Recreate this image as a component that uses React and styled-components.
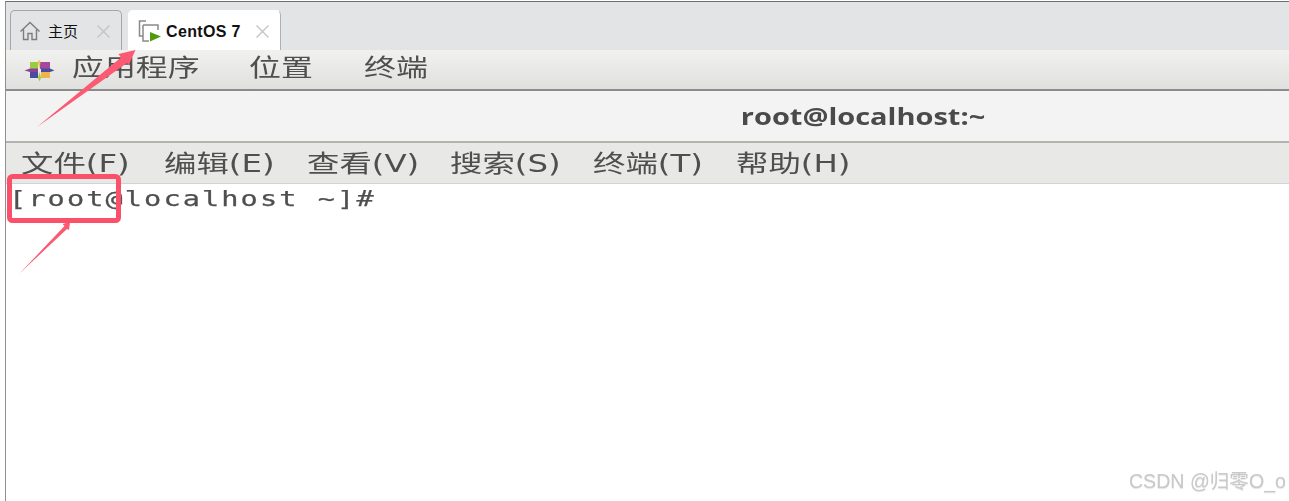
import React from "react";
import styled, { createGlobalStyle } from "styled-components";

const Global = createGlobalStyle`
  html, body { margin: 0; padding: 0; background: #fff; }
  #root { width: 1289px; height: 501px; overflow: hidden; }
`;
const CJK = `"Liberation Sans", "Noto Sans CJK SC", sans-serif`;
const WIDE = `"DejaVu Sans", "Noto Sans CJK SC", sans-serif`;

const Page = styled.div`
  position: relative; width: 1289px; height: 501px; overflow: hidden; background: #fff;
  display: flex; flex-direction: column; box-sizing: border-box; padding-top: 1px;
`;
const Window = styled.div`
  flex: 1; display: flex; flex-direction: column; margin-left: 5px;
  border-left: 1px solid #8f8f8f; border-top: 1px solid #6e6e6e;
`;
const TabBar = styled.div`
  height: 48px; box-sizing: border-box; background: #e3e4e6; display: flex; align-items: flex-end;
  gap: 6px; padding-left: 4px;
`;
const Tab = styled.div`
  height: 40px; box-sizing: border-box; width: ${p => p.$w}px; display: flex; align-items: center;
  border: 1px solid #a6a6a6; border-bottom: none; border-radius: 5px 5px 0 0;
  background: ${p => (p.$active ? "#fff" : "#e3e4e6")}; padding-left: ${p => p.$pl}px; position: relative;
  ${p => p.$active && "border-color: #fff #b0b0b0 #fff #fff;"}
`;
const TabLabel = styled.span`
  font: ${p => (p.$bold ? "bold 16px" : "15px")} ${CJK}; color: #111; margin-left: ${p => p.$ml}px; white-space: nowrap;
  letter-spacing: ${p => (p.$bold ? "0.35px" : "0")};
  margin-top: ${p => (p.$bold ? "2px" : "-1px")};
`;
const TabClose = styled.svg`
  position: absolute; right: 10px; top: 13px; width: 15px; height: 15px;
`;
const AppBar = styled.div`
  height: 39px; box-sizing: border-box; background: linear-gradient(#f1f1f0, #e0e0df); display: flex; align-items: center;
  padding: 0 0 9px 18px;
`;
const AppRule = styled.div` height: 2px; background: #8b8b8b; `;
const Logo = styled.svg` width: 31px; height: 23px; margin: 10px 17px 0 0; `;
const AppItem = styled.div` width: ${p => p.$w}px; `;
const Stretch = styled.span`
  display: inline-block; transform-origin: left center; transform: scaleX(${p => p.$sx});
  font: ${p => p.$size}px ${p => (p.$wide ? WIDE : CJK)}; color: #4f4f4f; white-space: nowrap; filter: blur(0.5px);
`;
const TitleBar = styled.div`
  height: 52px; background: #f3f3f3; display: flex; align-items: center; justify-content: center;
  box-sizing: border-box; border-bottom: 2px solid #b4b4ae;
`;
const Title = styled.span`
  font: bold 23px "Open Sans", "Noto Sans", sans-serif; color: #4a4a4a; transform: scaleX(1.26); filter: blur(0.4px);
  margin-left: 432px; margin-top: -1px;
`;
const MenuBar = styled.div`
  height: 41px; box-sizing: border-box; background: #e8e8e6; border-bottom: 1px solid #d4d4d2;
  display: flex; align-items: center; padding: 0 0 4px 15px;
`;
const MenuItem = styled.div` width: 143px; `;
const Terminal = styled.div`
  flex: 1; background: #fff; padding: 0 0 0 3px; display: flex; align-items: flex-start;
`;
const Prompt = styled.pre`
  margin: 0; font: 22px "DejaVu Sans Mono", "Liberation Mono", monospace; color: #4f4f4f; letter-spacing: 1.6px;
  height: 30px; line-height: 30px; transform-origin: left center; transform: scaleX(1.3); filter: blur(0.5px);
  -webkit-text-stroke: 0.25px #4f4f4f;
`;
const Overlay = styled.svg`
  position: absolute; left: 0; top: 0; width: 1289px; height: 501px; pointer-events: none;
`;
const Watermark = styled.div`
  position: absolute; right: 3px; bottom: 7px; font: 19.6px ${CJK}; color: #c9c9c9; white-space: nowrap;
  text-shadow: 0 1px 1px #e4e4e4; filter: blur(0.3px);
`;

const apps = [["应用程序", 177], ["位置", 115], ["终端", 80]];
const menus = ["文件(F)", "编辑(E)", "查看(V)", "搜索(S)", "终端(T)", "帮助(H)"];

const CloseX = () => (
  <TabClose viewBox="0 0 15 15"><path d="M1.5 1.5 13.5 13.5M13.5 1.5 1.5 13.5" stroke="#c4c4c4" strokeWidth="1.4" fill="none" /></TabClose>
);

export default function App() {
  return (
    <Page>
      <Global />
      <Window>
        <TabBar>
          <Tab $w={112} $pl={8}>
            <svg width="22" height="20" viewBox="0 0 22 20" fill="none" stroke="#7d7d7d" strokeWidth="1.4">
              <path d="M1.5 10.5 11 1.5l9.500 9M4.500 8.500V18.500H9v-6h4v6h4.500V8.500" />
            </svg>
            <TabLabel $ml={7}>主页</TabLabel>
            <CloseX />
          </Tab>
          <Tab $w={153} $active $pl={9}>
            <svg width="24" height="24" viewBox="0 0 24 24" fill="none">
              <path d="M8 2H1.500V17H5M5 6H20V11M5 6V22H11" stroke="#8a8a8a" strokeWidth="1.5" />
              <path d="M12 13 23 17.500 12 22.500Z" fill="#4f9a0f" />
            </svg>
            <TabLabel $bold $ml={4}>CentOS 7</TabLabel>
            <CloseX />
          </Tab>
        </TabBar>
        <AppBar>
          <Logo viewBox="0 0 31 23">
            <path d="M6 3H14V10H6Z" fill="#9bcb45" />
            <path d="M16 3H26V10H16Z" fill="#a5479c" />
            <path d="M6 13H14V19H6Z" fill="#4a4aa0" />
            <path d="M17 13H26V19H17Z" fill="#f0b548" />
            <path d="M14 3 15 0.500 16.500 3 15.500 10Z" fill="#efc14e" />
            <path d="M14 19 15.500 22.500 17 19 15.500 13Z" fill="#9fcb4a" />
            <path d="M0.500 11.500 6 9.500H14V13H6Z" fill="#8f3f98" />
            <path d="M30.500 11.500 26 9.500H17V13H26Z" fill="#4a4aa0" />
          </Logo>
          {apps.map(([t, w]) => (
            <AppItem key={t} $w={w}><Stretch $size={24} $sx={1.33}>{t}</Stretch></AppItem>
          ))}
        </AppBar>
        <AppRule />
        <TitleBar><Title>root@localhost:~</Title></TitleBar>
        <MenuBar>
          {menus.map(t => (
            <MenuItem key={t}><Stretch $wide $size={24} $sx={1.35}>{t}</Stretch></MenuItem>
          ))}
        </MenuBar>
        <Terminal><Prompt>[root@localhost ~]#</Prompt></Terminal>
      </Window>
      <Overlay viewBox="0 0 1289 501">
        <path d="M37 127 127 63 128.500 65.500 135.500 50 118.500 54 121 57.500Z" fill="#fb5a72" />
        <path d="M20 273 67 229 69 230 70 222 62.500 224 64.500 226Z" fill="#fb5a72" />
        <rect x="9.500" y="176.500" width="109" height="44" rx="3" fill="none" stroke="#fb5069" strokeWidth="5" />
      </Overlay>
      <Watermark>CSDN @归零O_o</Watermark>
    </Page>
  );
}
